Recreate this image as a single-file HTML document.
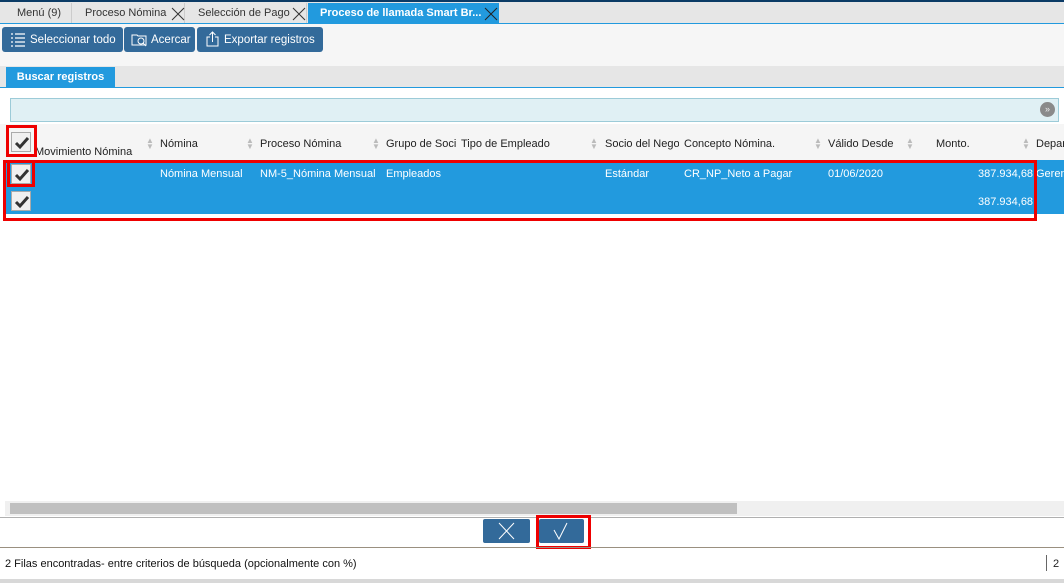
<!DOCTYPE html><html><head><style>
*{box-sizing:border-box;margin:0;padding:0}
body{width:1064px;height:583px;position:relative;background:#fff;font-family:"Liberation Sans",sans-serif;font-size:11px;color:#222;overflow:hidden}
.a{position:absolute}
.tab{position:absolute;top:3px;height:20px;line-height:21px;font-size:11px;color:#333;border-right:1px solid #ccc;padding-left:12px}
.tab svg{position:absolute;top:4px}
.btn{position:absolute;top:27px;height:25px;background:#336a9a;border-radius:3px;color:#fff;font-size:11.5px;line-height:26px}
.h{position:absolute;top:138px;font-size:11px;color:#222}
.s{position:absolute;top:138px;color:#bbb;font-size:8px;line-height:6px}
.c{position:absolute;font-size:11px;color:#fff}
.cb{position:absolute;width:20px;height:20px;background:#f0f0f0;border:1px solid #aaa}
.cb svg{position:absolute;left:1px;top:1px}
.red{position:absolute;border:3px solid #e00}
</style></head><body>
<div class="a" style="left:0;top:0;width:1064px;height:2px;background:#0b3b66"></div>
<div class="a" style="left:0;top:2px;width:1064px;height:21px;background:#e6e6e6"></div>
<div class="tab" style="left:5px;width:67px">Menú (9)</div>
<div class="tab" style="left:73px;width:112px">Proceso Nómina<svg style="left:98px" width="14" height="14"><path d="M1 1l12 12M13 1L1 13" stroke="#333"/></svg></div>
<div class="tab" style="left:186px;width:121px">Selección de Pago<svg style="left:106px" width="14" height="14"><path d="M1 1l12 12M13 1L1 13" stroke="#333"/></svg></div>
<div class="tab" style="left:308px;width:191px;background:#229ade;color:#fff;font-weight:bold;border:none">Proceso de llamada Smart Br...<svg style="left:176px" width="14" height="14"><path d="M1 1l12 12M13 1L1 13" stroke="#222"/></svg></div>
<div class="a" style="left:0;top:23px;width:1064px;height:1px;background:#229ade"></div>
<div class="a" style="left:0;top:24px;width:1064px;height:42px;background:#f6f6f6"></div>
<div class="btn" style="left:2px;width:121px;padding-left:28px"><svg class="a" style="left:8px;top:5px" width="16" height="15"><g stroke="#fff" stroke-width="1.3"><path d="M1 2h2M5 2h10M1 6h2M5 6h10M1 10h2M5 10h10M1 14h2M5 14h10"/></g></svg>Seleccionar todo</div>
<div class="btn" style="left:124px;width:71px;padding-left:27px"><svg class="a" style="left:7px;top:5px" width="17" height="15" fill="none" stroke="#fff"><path d="M1 3h5l1 1h8v9H1z"/><circle cx="10" cy="9" r="3"/><path d="M12 11l3 3"/></svg>Acercar</div>
<div class="btn" style="left:197px;width:126px;padding-left:27px"><svg class="a" style="left:8px;top:4px" width="15" height="16" fill="none" stroke="#fff"><path d="M5 6H2v9h11V6h-3M7.5 11V1M4.5 4l3-3 3 3"/></svg>Exportar registros</div>
<div class="a" style="left:0;top:66px;width:1064px;height:21px;background:#e6e6e6"></div>
<div class="a" style="left:6px;top:67px;width:109px;height:20px;background:#229ade;color:#fff;font-weight:bold;font-size:11px;line-height:20px;text-align:center">Buscar registros</div>
<div class="a" style="left:0;top:87px;width:1064px;height:1px;background:#229ade"></div>
<div class="a" style="left:10px;top:98px;width:1049px;height:24px;background:#e0f0f4;border:1px solid #9ccbd8"></div>
<div class="a" style="left:1040px;top:102px;width:15px;height:15px;border-radius:50%;background:#8a8a8a;color:#eee;font-size:9px;text-align:center;line-height:15px">»</div>
<div class="a" style="left:0;top:124px;width:1064px;height:36px;background:#f5f5f5"></div>
<div class="h" style="left:35px;top:146px">Movimiento Nómina</div>
<div class="s" style="left:146px">▲<br>▼</div><div class="h" style="left:160px">Nómina</div>
<div class="s" style="left:246px">▲<br>▼</div><div class="h" style="left:260px">Proceso Nómina</div>
<div class="s" style="left:372px">▲<br>▼</div><div class="h" style="left:386px;width:70px;overflow:hidden;white-space:nowrap">Grupo de Soci</div>
<div class="h" style="left:461px">Tipo de Empleado</div>
<div class="s" style="left:590px">▲<br>▼</div><div class="h" style="left:605px;width:74px;overflow:hidden;white-space:nowrap">Socio del Negocio</div>
<div class="h" style="left:684px">Concepto Nómina.</div>
<div class="s" style="left:814px">▲<br>▼</div><div class="h" style="left:828px">Válido Desde</div>
<div class="s" style="left:906px">▲<br>▼</div><div class="h" style="left:936px">Monto.</div>
<div class="s" style="left:1022px">▲<br>▼</div><div class="h" style="left:1036px">Depar</div>
<div class="a" style="left:5px;top:160px;width:1059px;height:54px;background:#229ade"></div>
<div class="c" style="left:160px;top:168px">Nómina Mensual</div>
<div class="c" style="left:260px;top:168px">NM-5_Nómina Mensual</div>
<div class="c" style="left:386px;top:168px">Empleados</div>
<div class="c" style="left:605px;top:168px">Estándar</div>
<div class="c" style="left:684px;top:168px">CR_NP_Neto a Pagar</div>
<div class="c" style="left:828px;top:168px">01/06/2020</div>
<div class="c" style="left:978px;top:168px">387.934,68</div>
<div class="c" style="left:1036px;top:168px">Geren</div>
<div class="c" style="left:978px;top:196px">387.934,68</div>
<div class="cb" style="left:11px;top:132px"><svg width="18" height="18"><path d="M3 9l4 4 8-9" stroke="#333" stroke-width="3" fill="none"/></svg></div>
<div class="cb" style="left:11px;top:164px"><svg width="18" height="18"><path d="M3 9l4 4 8-9" stroke="#333" stroke-width="3" fill="none"/></svg></div>
<div class="cb" style="left:11px;top:191px"><svg width="18" height="18"><path d="M3 9l4 4 8-9" stroke="#333" stroke-width="3" fill="none"/></svg></div>
<div class="red" style="left:6px;top:125px;width:31px;height:32px"></div>
<div class="red" style="left:3px;top:160px;width:1034px;height:61px"></div>
<div class="red" style="left:7px;top:160px;width:28px;height:27px"></div>
<div class="a" style="left:5px;top:501px;width:1059px;height:15px;background:#f0f0f0"></div>
<div class="a" style="left:10px;top:503px;width:727px;height:11px;background:#c0c0c0"></div>
<div class="a" style="left:0;top:517px;width:1064px;height:1px;background:#b0b0b0"></div>
<div class="a" style="left:483px;top:519px;width:47px;height:24px;background:#336a9a;border-radius:2px"><svg width="47" height="24"><path d="M16 4l15 16M31 4L16 20" stroke="#fff" stroke-width="1"/></svg></div>
<div class="a" style="left:539px;top:519px;width:45px;height:24px;background:#336a9a;border-radius:2px"><svg width="45" height="24"><path d="M15 11l5 9 8-16" stroke="#fff" stroke-width="1" fill="none"/></svg></div>
<div class="red" style="left:536px;top:515px;width:55px;height:34px"></div>
<div class="a" style="left:0;top:547px;width:1064px;height:1px;background:#9a9080"></div>
<div class="a" style="left:5px;top:558px;font-size:11px;color:#111">2 Filas encontradas- entre criterios de búsqueda (opcionalmente con %)</div>
<div class="a" style="left:1046px;top:555px;width:1px;height:16px;background:#666"></div>
<div class="a" style="left:1053px;top:558px;font-size:11px">2</div>
<div class="a" style="left:0;top:579px;width:1064px;height:4px;background:#d8d8d8"></div>
</body></html>
